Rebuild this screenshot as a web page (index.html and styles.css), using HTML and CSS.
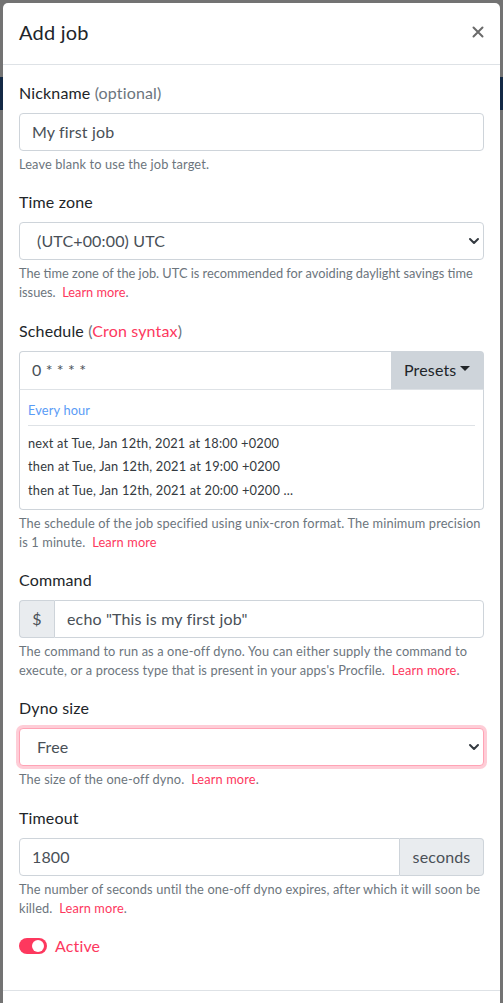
FILE: index.html
```html
<!DOCTYPE html>
<html>
<head>
<meta charset="utf-8">
<link rel="stylesheet" href="styles.css">
</head>
<body>
<div class="page">
  <div class="page-band"></div>
</div>
<div class="backdrop"></div>
<div class="modal">
  <div class="modal-header">
    <h5 class="modal-title">Add job</h5>
    <svg class="close" width="12" height="12" viewBox="0 0 12 12"><path d="M1.5 1.5 L10.5 10.5 M10.5 1.5 L1.5 10.5" stroke="#6a6a6a" stroke-width="2" stroke-linecap="round"/></svg>
  </div>
  <div class="modal-body">
    <div class="form-group">
      <label class="label">Nickname <span class="muted">(optional)</span></label>
      <div class="input">My first job</div>
      <div class="help">Leave blank to use the job target.</div>
    </div>
    <div class="form-group">
      <label class="label">Time zone</label>
      <div class="input select"><span>(UTC+00:00) UTC</span>
        <svg class="chev" width="12" height="12" viewBox="0 0 12 12"><path d="M2 4 L6 8 L10 4" fill="none" stroke="#343a40" stroke-width="2" stroke-linecap="round" stroke-linejoin="round"/></svg>
      </div>
      <div class="help help-tight">The time zone of the job. UTC is recommended for avoiding daylight savings time issues. &nbsp;<a class="link">Learn more</a>.</div>
    </div>
    <div class="form-group">
      <label class="label">Schedule <span class="muted">(</span><a class="link">Cron syntax</a><span class="muted">)</span></label>
      <div class="group">
        <div class="input grow top-left">0 * * * *</div>
        <div class="presets">Presets <span class="caret"></span></div>
      </div>
      <div class="preview">
        <div class="preview-title">Every hour</div>
        <div class="preview-line">next at Tue, Jan 12th, 2021 at 18:00 +0200</div>
        <div class="preview-line">then at Tue, Jan 12th, 2021 at 19:00 +0200</div>
        <div class="preview-line">then at Tue, Jan 12th, 2021 at 20:00 +0200 ...</div>
      </div>
      <div class="help">The schedule of the job specified using unix-cron format. The minimum precision is 1 minute. &nbsp;<a class="link">Learn more</a></div>
    </div>
    <div class="form-group">
      <label class="label">Command</label>
      <div class="group">
        <div class="addon addon-left">$</div>
        <div class="input grow right">echo "This is my first job"</div>
      </div>
      <div class="help">The command to run as a one-off dyno. You can either supply the command to execute, or a process type that is present in your apps's Procfile. &nbsp;<a class="link">Learn more</a>.</div>
    </div>
    <div class="form-group">
      <label class="label">Dyno size</label>
      <div class="input select focus"><span>Free</span>
        <svg class="chev" width="12" height="12" viewBox="0 0 12 12"><path d="M2 4 L6 8 L10 4" fill="none" stroke="#343a40" stroke-width="2" stroke-linecap="round" stroke-linejoin="round"/></svg>
      </div>
      <div class="help">The size of the one-off dyno. &nbsp;<a class="link">Learn more</a>.</div>
    </div>
    <div class="form-group">
      <label class="label">Timeout</label>
      <div class="group">
        <div class="input grow left">1800</div>
        <div class="addon addon-right">seconds</div>
      </div>
      <div class="help">The number of seconds until the one-off dyno expires, after which it will soon be killed. &nbsp;<a class="link">Learn more</a>.</div>
    </div>
    <div class="form-group switch-row">
      <span class="switch"><span class="knob"></span></span>
      <span class="switch-label">Active</span>
    </div>
  </div>
  <div class="modal-footer"></div>
</div>
</body>
</html>
```
FILE: styles.css
```css
* { box-sizing: border-box; }
html, body { margin: 0; padding: 0; }
body {
  width: 503px;
  height: 1003px;
  overflow: hidden;
  background: #fff;
  font-family: Lato, "Noto Sans", sans-serif;
  color: #212529;
  position: relative;
  letter-spacing: 0.15px;
}
.page { height: 1003px; }
.page-band { margin-top: 77px; height: 33px; background: #2d5b9a; }
.backdrop {
  position: absolute;
  inset: 0;
  background: rgba(0, 0, 0, 0.55);
}
.modal {
  position: absolute;
  top: 3px;
  left: 3px;
  width: 497px;
  height: 1040px;
  background: #fff;
  border-radius: 5px;
}
.modal-header {
  display: flex;
  align-items: flex-start;
  justify-content: space-between;
  padding: 14px 16px 17px 16px;
  border-bottom: 1px solid #dee2e6;
}
.modal-title {
  margin: 0;
  font-size: 20px;
  font-weight: 400;
  line-height: 30px;
  color: #212529;
  letter-spacing: 0.2px;
}
.close {
  display: block;
  margin-top: 9px;
  margin-right: 0px;
}
.modal-body { padding: 16px 16px 16px 16px; }
.form-group { margin-bottom: 16px; }
.label {
  display: block;
  font-size: 16px;
  line-height: 24px;
  margin-bottom: 8px;
  color: #212529;
}
.muted { color: #6c757d; }
.link { color: #fd385e; text-decoration: none; }
.input {
  height: 38px;
  border: 1px solid #ced4da;
  border-radius: 4px;
  padding: 0 12px;
  font-size: 16px;
  line-height: 36px;
  color: #495057;
  background: #fff;
}
.select {
  display: flex;
  align-items: center;
  justify-content: space-between;
  padding-left: 17px;
  padding-right: 3px;
}
.select.focus {
  border-color: #ffa3b5;
  box-shadow: 0 0 0 3px rgba(253, 56, 94, 0.25);
}
.chev { display: block; }
.help {
  margin-top: 4px;
  font-size: 12.8px;
  line-height: 19.2px;
  color: #6c757d;
  letter-spacing: 0.13px;
}
.help-tight { letter-spacing: 0; }
.group { display: flex; }
.grow { flex: 1; }
.top-left { border-radius: 4px 0 0 0; border-right: 0; border-bottom: 0; }
.right { border-radius: 0 4px 4px 0; }
.left { border-radius: 4px 0 0 4px; }
.presets {
  width: 93px;
  height: 38px;
  background: #ced4da;
  border-radius: 0 4px 0 0;
  font-size: 16px;
  line-height: 38px;
  color: #212529;
  padding-left: 13px;
  display: flex;
  align-items: center;
  gap: 4px;
}
.caret {
  width: 0; height: 0;
  border-left: 5px solid transparent;
  border-right: 5px solid transparent;
  border-top: 5px solid #212529;
  margin-top: -2px;
}
.preview {
  border: 1px solid #ced4da;
  border-top: 1px solid #dee2e6;
  border-radius: 0 0 4px 4px;
  padding: 11px 8px 9px 8px;
}
.preview-title {
  font-size: 12.8px;
  line-height: 19px;
  color: #5a9bf6;
  padding-bottom: 5px;
  border-bottom: 1px solid #dee2e6;
  margin-bottom: 8px;
}
.preview-line {
  font-size: 12.8px;
  line-height: 19px;
  color: #343a40;
  margin-bottom: 4.5px;
  letter-spacing: 0.2px;
}
.preview-line:last-child { margin-bottom: 0; }
.addon {
  height: 38px;
  background: #e9ecef;
  border: 1px solid #ced4da;
  font-size: 16px;
  line-height: 36px;
  color: #495057;
  text-align: center;
}
.addon-left { width: 35px; border-radius: 4px 0 0 4px; border-right: 0; }
.addon-right { width: 84px; border-radius: 0 4px 4px 0; border-left: 0; }
.switch-row {
  display: flex;
  align-items: center;
  height: 24px;
}
.switch {
  width: 28px;
  height: 16px;
  border-radius: 8px;
  background: #fd385e;
  position: relative;
  margin-right: 8px;
}
.knob {
  position: absolute;
  top: 2px;
  right: 3px;
  width: 12px;
  height: 12px;
  border-radius: 50%;
  background: #fff;
}
.switch-label { font-size: 16px; line-height: 24px; color: #fd385e; }
.modal-footer { border-top: 1px solid #dee2e6; height: 60px; }
```
